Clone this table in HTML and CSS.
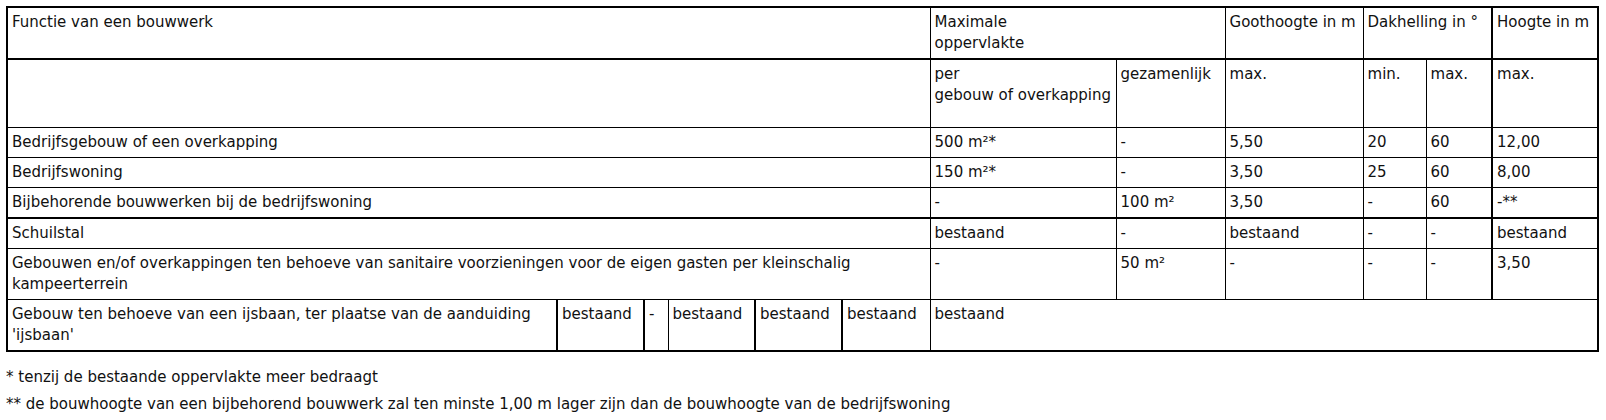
FILE: index.html
```html
<!DOCTYPE html>
<html lang="nl">
<head>
<meta charset="utf-8">
<title>Bouwregels</title>
<link rel="stylesheet" href="styles.css">
</head>
<body>
<div class="page">
<table class="rules">
<colgroup>
<col class="c1"><col class="c2"><col class="c3"><col class="c4"><col class="c5"><col class="c6">
<col class="c7"><col class="c8"><col class="c9"><col class="c10"><col class="c11"><col class="c12">
</colgroup>
<tr class="head1">
<td colspan="6">Functie van een bouwwerk</td>
<td colspan="2">Maximale<br>oppervlakte</td>
<td>Goothoogte in m</td>
<td colspan="2">Dakhelling in °</td>
<td class="hoog">Hoogte in m</td>
</tr>
<tr class="head2">
<td colspan="6"></td>
<td>per<br>gebouw of overkapping</td>
<td>gezamenlijk</td>
<td>max.</td>
<td>min.</td>
<td>max.</td>
<td class="hoog">max.</td>
</tr>
<tr>
<td colspan="6">Bedrijfsgebouw of een overkapping</td>
<td>500 m²*</td>
<td>-</td>
<td>5,50</td>
<td>20</td>
<td>60</td>
<td class="hoog">12,00</td>
</tr>
<tr>
<td colspan="6">Bedrijfswoning</td>
<td>150 m²*</td>
<td>-</td>
<td>3,50</td>
<td>25</td>
<td>60</td>
<td class="hoog">8,00</td>
</tr>
<tr>
<td colspan="6">Bijbehorende bouwwerken bij de bedrijfswoning</td>
<td>-</td>
<td>100 m²</td>
<td>3,50</td>
<td>-</td>
<td>60</td>
<td class="hoog">-**</td>
</tr>
<tr class="split">
<td colspan="6">Schuilstal</td>
<td>bestaand</td>
<td>-</td>
<td>bestaand</td>
<td>-</td>
<td>-</td>
<td class="hoog">bestaand</td>
</tr>
<tr>
<td colspan="6">Gebouwen en/of overkappingen ten behoeve van sanitaire voorzieningen voor de eigen gasten per kleinschalig kampeerterrein</td>
<td>-</td>
<td>50 m²</td>
<td>-</td>
<td>-</td>
<td>-</td>
<td class="hoog">3,50</td>
</tr>
<tr class="last">
<td>Gebouw ten behoeve van een ijsbaan, ter plaatse van de aanduiding 'ijsbaan'</td>
<td class="thick">bestaand</td>
<td class="thick">-</td>
<td>bestaand</td>
<td class="thick">bestaand</td>
<td class="thick">bestaand</td>
<td colspan="6">bestaand</td>
</tr>
</table>
<p class="note">* tenzij de bestaande oppervlakte meer bedraagt</p>
<p class="note">** de bouwhoogte van een bijbehorend bouwwerk zal ten minste 1,00 m lager zijn dan de bouwhoogte van de bedrijfswoning</p>
</div>
</body>
</html>
```

FILE: styles.css
```css
html, body {
  margin: 0;
  padding: 0;
  background: #ffffff;
}

.page {
  padding: 6px 0 0 6px;
  font-family: "DejaVu Sans", Verdana, sans-serif;
  font-size: 15px;
  line-height: 21px;
  color: #111111;
}

.rules {
  border-collapse: collapse;
  table-layout: fixed;
  width: 1592px;
  border: 2px solid #000;
}

.c1 { width: 550px; }
.c2 { width: 87px; }
.c3 { width: 24px; }
.c4 { width: 87px; }
.c5 { width: 87px; }
.c6 { width: 88px; }
.c7 { width: 186px; }
.c8 { width: 109px; }
.c9 { width: 138px; }
.c10 { width: 63px; }
.c11 { width: 66px; }
.c12 { width: 106px; }

.rules td {
  border: 1px solid #000;
  padding: 4px 4px 4px 4px;
  vertical-align: top;
  text-align: left;
  overflow: hidden;
}

.rules .head1 td {
  border-bottom: 2px solid #000;
}

.rules .head2 td {
  height: 59px;
}

.rules td.hoog {
  border-left: 2px solid #000;
}

.rules .split td {
  border-top: 2px solid #000;
}

.rules .last td.thick {
  border-left: 2px solid #000;
}

.note {
  margin: 15px 0 0 0;
}

.note + .note {
  margin-top: 6px;
}
```
